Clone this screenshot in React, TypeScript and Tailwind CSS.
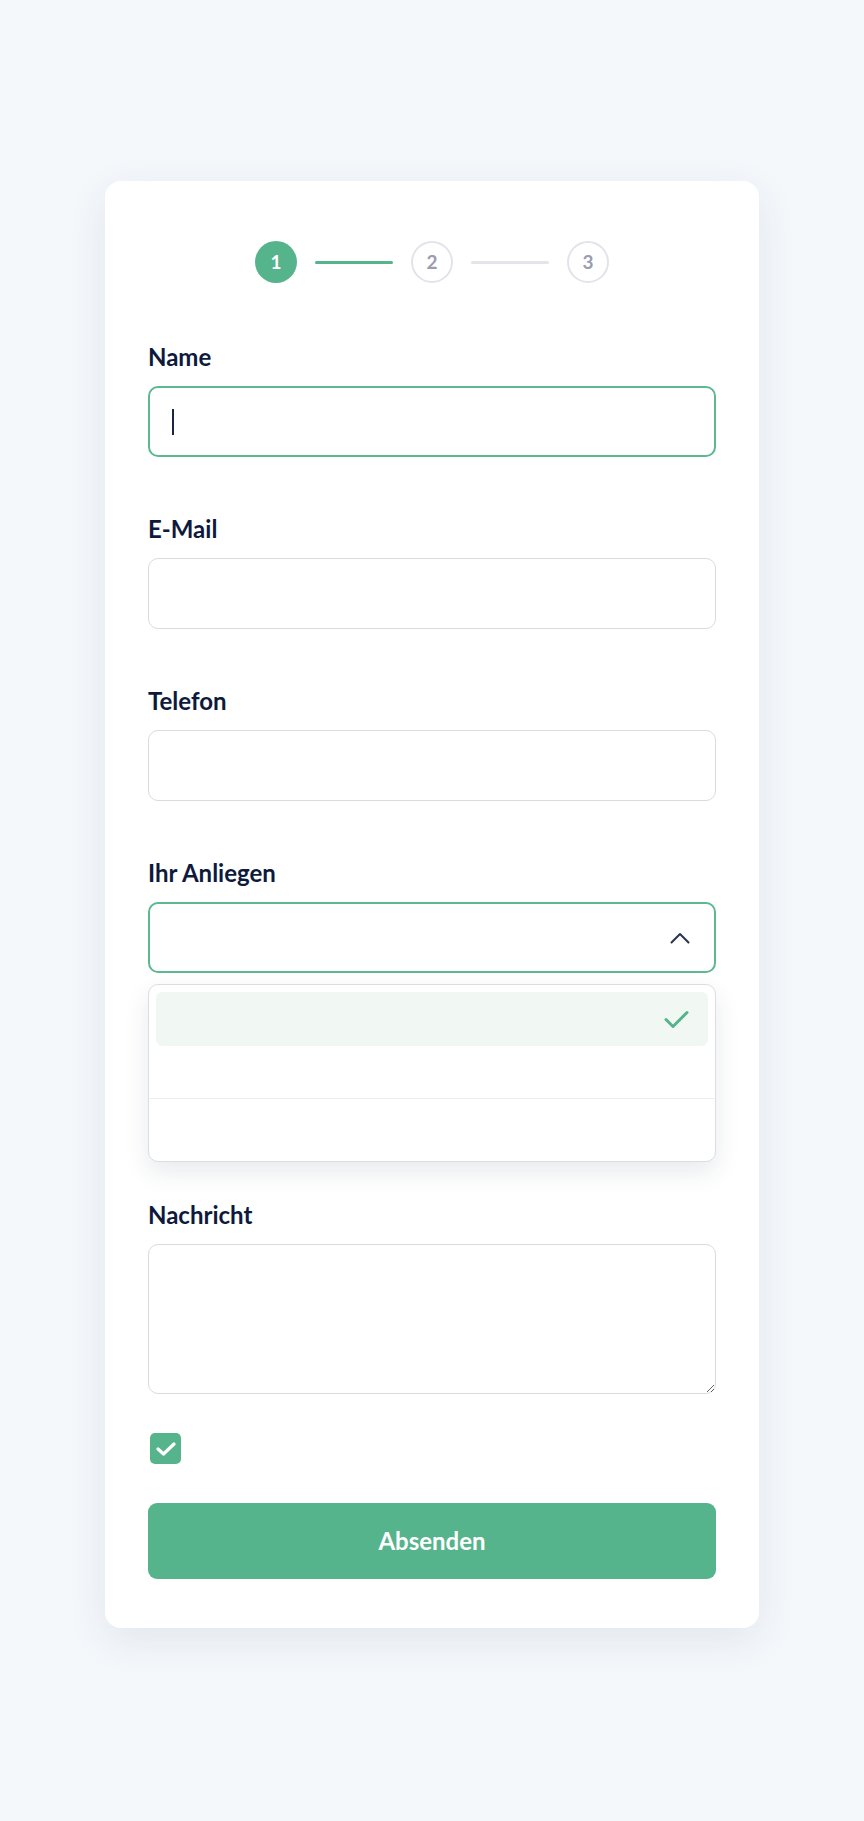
import React from 'react';

const green = 'bg-[#55b48b]';

function Stepper() {
  return (
    <div className="flex items-center justify-center gap-[18px]">
      <div className={`w-[42px] h-[42px] rounded-full ${green} flex items-center justify-center text-white text-[19px] font-bold`}>1</div>
      <div className="w-[78px] h-[3px] bg-[#55b48b] rounded-full" />
      <div className="w-[42px] h-[42px] rounded-full border-2 border-[#e2e4ea] flex items-center justify-center text-[#9a9cb2] text-[19px] font-bold">2</div>
      <div className="w-[78px] h-[3px] bg-[#e3e5eb] rounded-full" />
      <div className="w-[42px] h-[42px] rounded-full border-2 border-[#e2e4ea] flex items-center justify-center text-[#9a9cb2] text-[19px] font-bold">3</div>
    </div>
  );
}

function Label({ children }: { children: React.ReactNode }) {
  return <div className="h-7 leading-7 text-[24px] font-bold text-[#0e1a3c]">{children}</div>;
}

function Input({ focused = false, cursor = false }: { focused?: boolean; cursor?: boolean }) {
  return (
    <div
      className={`mt-[15px] h-[71px] rounded-[10px] bg-white flex items-center px-[22px] ${
        focused ? 'border-2 border-[#5cb88f]' : 'border-[1.5px] border-[#d9dbe1]'
      }`}
    >
      {cursor && <span className="w-[2px] h-[26px] bg-[#1b2540]" />}
    </div>
  );
}

export default function App() {
  return (
    <div className="min-h-screen bg-[#f4f8fb] pt-[181px] pb-[193px]" style={{ fontFamily: 'Lato, "Open Sans", sans-serif' }}>
      <div className="w-[654px] mx-auto bg-white rounded-2xl shadow-[0_12px_40px_rgba(40,60,100,0.09)] px-[43px] pt-[60px] pb-[49px]">
        <Stepper />

        <div className="mt-[60px]">
          <Label>Name</Label>
          <Input focused cursor />
        </div>

        <div className="mt-[58px]">
          <Label>E-Mail</Label>
          <Input />
        </div>

        <div className="mt-[58px]">
          <Label>Telefon</Label>
          <Input />
        </div>

        <div className="mt-[58px]">
          <Label>Ihr Anliegen</Label>
          <div className="mt-[15px] h-[71px] rounded-[10px] bg-white border-2 border-[#5cb88f] flex items-center justify-end pr-[24px]">
            <svg width="20" height="12" viewBox="0 0 20 12" fill="none">
              <polyline points="1.5,10.5 10,2 18.5,10.5" stroke="#2b3550" strokeWidth="2" strokeLinecap="round" strokeLinejoin="round" />
            </svg>
          </div>

          {/* open list */}
          <div className="mt-[11px] h-[178px] rounded-[10px] bg-white border-[1.5px] border-[#dcdde3] shadow-[0_10px_24px_rgba(30,45,80,0.10)] flex flex-col overflow-hidden">
            <div className="px-[7px] pt-[7px]">
              <div className="h-[54px] rounded-md bg-[#f1f8f4] flex items-center justify-end pr-[19px]">
                <svg width="25" height="19" viewBox="0 0 25 19" fill="none">
                  <polyline points="2,9.5 9,16.5 23,2.5" stroke="#55b48b" strokeWidth="3" strokeLinecap="round" strokeLinejoin="round" />
                </svg>
              </div>
            </div>
            <div className="h-[53px] border-b-[1.5px] border-[#ecedf1]" />
            <div className="flex-1" />
          </div>
        </div>

        <div className="mt-[39px]">
          <Label>Nachricht</Label>
          <textarea className="mt-[15px] block w-full h-[150px] rounded-[10px] bg-white border-[1.5px] border-[#d9dbe1] outline-none" />
        </div>

        <div className="mt-[39px] pl-[2px]">
          <div className={`w-[31px] h-[31px] rounded-[5px] ${green} flex items-center justify-center`}>
            <svg width="20" height="14" viewBox="0 0 20 14" fill="none">
              <polyline points="2,7 7.5,12 18,2" stroke="white" strokeWidth="3.2" strokeLinecap="round" strokeLinejoin="round" />
            </svg>
          </div>
        </div>

        <button className={`mt-[39px] w-full h-[76px] rounded-[9px] ${green} text-white text-[24px] font-bold`}>
          Absenden
        </button>
      </div>
    </div>
  );
}
